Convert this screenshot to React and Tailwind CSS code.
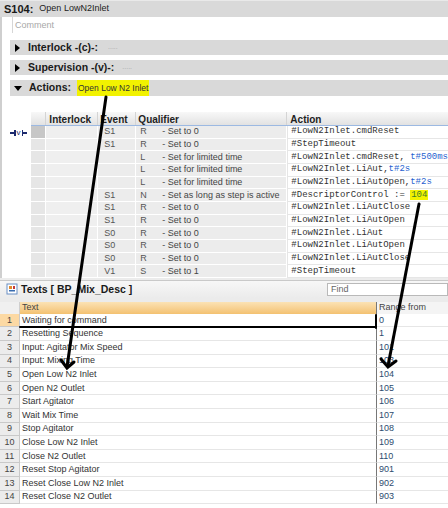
import React from 'react'

const actions = [
  { ev: 'S1', q: 'R', d: '- Set to 0', a: '#LowN2Inlet.cmdReset' },
  { ev: 'S1', q: 'R', d: '- Set to 0', a: '#StepTimeout' },
  { ev: '', q: 'L', d: '- Set for limited time', a: '#LowN2Inlet.cmdReset, ', t: 't#500ms' },
  { ev: '', q: 'L', d: '- Set for limited time', a: '#LowN2Inlet.LiAut,', t: 't#2s' },
  { ev: '', q: 'L', d: '- Set for limited time', a: '#LowN2Inlet.LiAutOpen,', t: 't#2s' },
  { ev: 'S1', q: 'N', d: '- Set as long as step is active', a: '#DescriptorControl := ', hl: '104' },
  { ev: 'S1', q: 'R', d: '- Set to 0', a: '#LowN2Inlet.LiAutClose' },
  { ev: 'S1', q: 'R', d: '- Set to 0', a: '#LowN2Inlet.LiAutOpen' },
  { ev: 'S0', q: 'R', d: '- Set to 0', a: '#LowN2Inlet.LiAut' },
  { ev: 'S0', q: 'R', d: '- Set to 0', a: '#LowN2Inlet.LiAutOpen' },
  { ev: 'S0', q: 'R', d: '- Set to 0', a: '#LowN2Inlet.LiAutClose' },
  { ev: 'V1', q: 'S', d: '- Set to 1', a: '#StepTimeout' },
]

const texts = [
  ['Waiting for command', '0'],
  ['Resetting Sequence', '1'],
  ['Input: Agitator Mix Speed', '101'],
  ['Input: Mixing Time', '103'],
  ['Open Low N2 Inlet', '104'],
  ['Open N2 Outlet', '105'],
  ['Start Agitator', '106'],
  ['Wait Mix Time', '107'],
  ['Stop Agitator', '108'],
  ['Close Low N2 Inlet', '109'],
  ['Close N2 Outlet', '110'],
  ['Reset Stop Agitator', '901'],
  ['Reset Close Low N2 Inlet', '902'],
  ['Reset Close N2 Outlet', '903'],
]

function Bar({ label, children }) {
  return (
    <div className="ml-2 flex h-[15px] items-center bg-[#d9d9d9]">
      <span className="ml-[5px] mr-[8px] h-0 w-0 border-y-[4px] border-l-[5px] border-y-transparent border-l-black" />
      <span className="text-[10.5px] font-bold text-[#1a1a1a]">{label}</span>
      {children}
    </div>
  )
}

export default function App() {
  return (
    <div className="relative h-[508px] w-[448px] overflow-hidden bg-white font-['Liberation_Sans',Arial,sans-serif] text-[#333]">
      {/* step header */}
      <div className="flex h-[17px] items-center border-t border-[#e9e9e9] bg-[#d9d9d9] pl-[4px]">
        <span className="text-[11px] font-bold text-[#1a1a1a]">S104:</span>
        <span className="ml-[6px] text-[9px] text-[#222]">Open LowN2Inlet</span>
      </div>

      <div className="border-l-2 border-[#cfcfcf]">
        {/* comment */}
        <div className="flex h-[23px]">
          <div className="ml-[10px] h-[16px] border-l border-[#d6d6d6] pl-[2px] pt-[2px] text-[9px] text-[#a8a8a8]">Comment</div>
        </div>

        <div className="flex flex-col gap-[5px]">
          <Bar label="Interlock -(c)-:">
            <span className="ml-[10px] text-[7px] text-[#aaa]">.....</span>
          </Bar>
          <Bar label="Supervision -(v)-:">
            <span className="ml-[8px] text-[7px] text-[#aaa]">.....</span>
          </Bar>
          <div className="ml-2 flex h-[16px] items-center bg-[#d9d9d9]">
            <span className="ml-[4px] mr-[7px] h-0 w-0 border-x-[4px] border-t-[5px] border-x-transparent border-t-black" />
            <span className="text-[10.5px] font-bold text-[#1a1a1a]">Actions:</span>
            <span className="ml-[6px] flex h-[16px] items-center bg-[#f2f200] px-[1px] text-[8.5px] text-[#333]">Open Low N2 Inlet</span>
          </div>
        </div>

        {/* actions table */}
        <div className="mt-[16px] flex">
          <div className="w-[33px] pt-[17px]">
            <div className="ml-[8px] flex items-center text-[#1c2a6e]">
              <span className="h-[1.5px] w-[4px] bg-[#1c2a6e]" />
              <span className="h-[6px] w-[1.5px] bg-[#1c2a6e]" />
              <span className="mx-[1px] text-[8px] leading-none">v</span>
              <span className="h-[6px] w-[1.5px] bg-[#1c2a6e]" />
              <span className="h-[1.5px] w-[4px] bg-[#1c2a6e]" />
            </div>
          </div>
          <div className="flex-1">
            <div className="flex h-[14px] border-b border-[#9cb9e2] bg-gradient-to-b from-[#f8f8f8] to-[#e2e2e2] text-[10px] font-bold text-[#222]">
              <div className="w-[15px] border-r border-[#d4d4d4]" />
              <div className="w-[52px] border-r border-[#d4d4d4] pl-[3px]">Interlock</div>
              <div className="w-[38px] border-r border-[#d4d4d4] pl-[2px]">Event</div>
              <div className="w-[151px] border-r border-[#d4d4d4] pl-[2px]">Qualifier</div>
              <div className="flex-1 pl-[3px]">Action</div>
            </div>
            {actions.map((r, i) => (
              <div key={i} className="flex h-[12.67px] items-center text-[9px] leading-none">
                <div className={`h-full w-[15px] border-b border-r border-white ${i === 0 ? 'bg-[#c7c7c7]' : 'bg-[#e6e6e6]'}`} />
                <div className="h-full w-[52px] border-b border-r border-white bg-[#efefef]" />
                <div className="flex h-full w-[38px] items-center border-b border-r border-white bg-[#ececec] pl-[6px] text-[#555]">{r.ev}</div>
                <div className="flex h-full w-[151px] items-center border-b border-r border-white bg-[#ececec] pl-[4px]">
                  <span className="w-[22px] text-[#555]">{r.q}</span>
                  <span className="whitespace-nowrap text-[#444]">{r.d}</span>
                </div>
                <div className="flex h-full flex-1 items-center border-b border-l border-[#e6e6e6] bg-white pl-[3px] font-['Liberation_Mono','Courier_New',monospace] text-[9px] text-[#333]">
                  <span className="whitespace-pre">
                    {r.a}
                    {r.t && <span className="text-[#1f5fcf]">{r.t}</span>}
                    {r.hl && <span className="bg-[#f2f200] px-[1px] text-[#3f7f2a]">{r.hl}</span>}
                  </span>
                </div>
              </div>
            ))}
          </div>
        </div>
      </div>

      <div className="h-[3px] border-b border-[#c9c9c9] bg-[#ececec]" />

      {/* texts panel */}
      <div className="flex h-[17px] items-center bg-gradient-to-b from-[#f7f7f7] to-[#ebebeb]">
        <svg width="12" height="12" viewBox="0 0 12 12" className="ml-[6px] mr-[3px]">
          <rect x="1" y="1" width="10" height="10" fill="#fff" stroke="#6b8fc4" />
          <rect x="3" y="3" width="3" height="3" fill="#e28a2b" />
          <rect x="3" y="7" width="6" height="1.5" fill="#3a6db0" />
          <rect x="7" y="3" width="2" height="3" fill="#c43a3a" />
        </svg>
        <span className="text-[10.5px] font-bold text-[#1a1a1a]">Texts [ BP_Mix_Desc ]</span>
        <div className="ml-auto flex h-[13px] w-[121px] items-center border border-[#b9b9b9] bg-white pl-[3px] text-[9px] text-[#666]">Find</div>
      </div>
      <div className="h-[4px] bg-[#ebebeb]" />

      <div className="flex h-[12px] text-[9px] leading-none">
        <div className="w-[20px] border-r border-[#cfcfcf] bg-[#f0f0f0]" />
        <div className="flex w-[356px] items-center bg-gradient-to-b from-[#fbe2b4] to-[#f3c170] pl-[2px] text-[#444]">Text</div>
        <div className="flex flex-1 items-center border-l border-[#777] bg-[#f4f4f4] pl-[2px] text-[#444]">Range from</div>
      </div>
      {texts.map(([t, n], i) => (
        <div key={i} className="flex h-[13.6px] text-[9px] leading-none">
          <div className={`flex w-[20px] items-center justify-center border-b border-r border-[#c9c9c9] ${i === 0 ? 'bg-[#fcd9a3]' : 'bg-[#ececec]'} text-[#444]`}>{i + 1}</div>
          <div className="flex w-[356px] items-center border-b border-[#e6e6e6] pl-[2px] text-[#333]">{t}</div>
          <div className="flex flex-1 items-center border-b border-l border-[#e6e6e6] border-l-[#777] pl-[2px] text-[#2d4b6e]">{n}</div>
        </div>
      ))}

      {/* annotation arrows */}
      <svg className="pointer-events-none absolute left-0 top-0" width="448" height="508" viewBox="0 0 448 508">
        <g stroke="#000" strokeLinecap="round" fill="none">
          <line x1="106" y1="97" x2="67" y2="367" strokeWidth="3" />
          <polyline points="61,360 67,368 74,362" strokeWidth="3" />
          <line x1="419" y1="204" x2="388" y2="366" strokeWidth="3" />
          <polyline points="381,359 388,367 396,361" strokeWidth="3" />
          <line x1="20" y1="327" x2="376" y2="327" strokeWidth="2" />
          <line x1="376" y1="315" x2="376" y2="328" strokeWidth="2" />
        </g>
      </svg>
    </div>
  )
}
